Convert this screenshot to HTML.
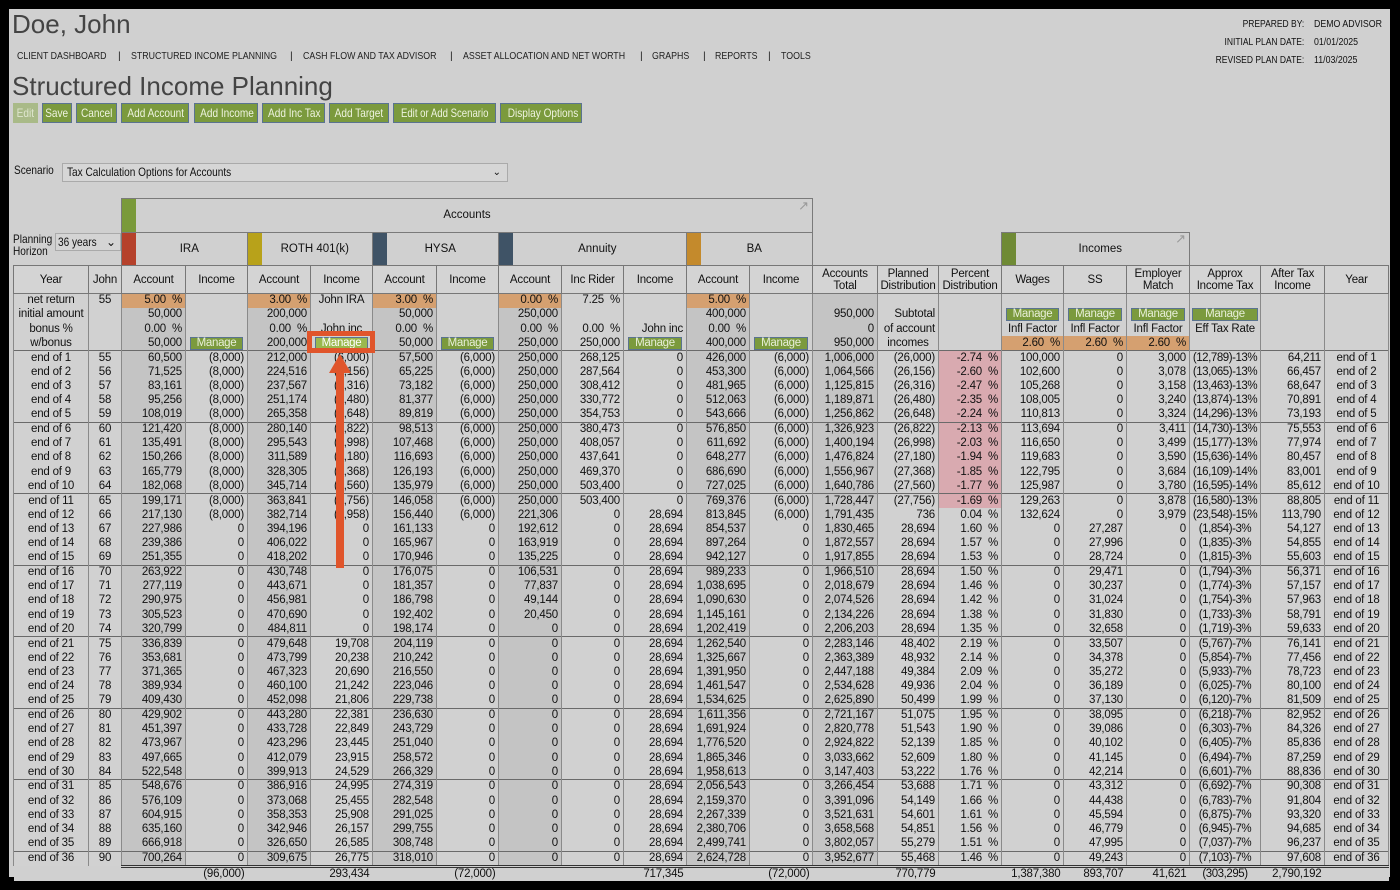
<!DOCTYPE html>
<html><head><meta charset="utf-8"><style>
*{box-sizing:border-box}
body{margin:0;width:1400px;height:890px;background:#000;overflow:hidden;font-family:"Liberation Sans",sans-serif;color:#111}
#pg{position:absolute;left:9px;top:9px;width:1381px;height:868px;background:#d0d0d0}
.a{position:absolute;white-space:nowrap}
.s{display:inline-block;transform:scaleX(.84);transform-origin:left center}
.btn{position:absolute;top:94px;height:20px;background:#7b9a3d;border:1px solid #5a7390;color:#eef3e0;font-size:12px;line-height:18px;text-align:center;white-space:nowrap;overflow:hidden}
.btn span{display:inline-block;transform:scaleX(.84)}
.nav{font-size:10.5px;top:41px;color:#222}
.box{position:absolute;border:1px solid #7a7a7a;font-size:11.5px;text-align:center}
.strip{position:absolute;top:0;bottom:0;left:0;width:14px}
table{position:absolute;left:4px;top:256px;border-collapse:collapse;table-layout:fixed;width:1375px;font-size:11.5px;letter-spacing:-0.2px}
td{padding:0 3px;height:14.3px;line-height:13px;text-align:right;border-left:1px solid #8a8a8a;border-right:1px solid #8a8a8a;white-space:nowrap;overflow:hidden}
td:nth-child(1),td:nth-child(2),td:nth-child(20),td:nth-child(22){text-align:center}
td:nth-child(20){letter-spacing:-0.45px;padding:0 1px}
tr.h td{height:28px;text-align:center;line-height:12px;border:1px solid #777;background:#d4d4d4;white-space:normal;font-size:11.5px;padding:0 1px;letter-spacing:-0.2px}
tr.g td{border-top:1.5px solid #6a6a6a}
.o{background:#d5a070}
.p{background:#d9aab0}
.m{display:block;background:#7b9a3d;border:1px solid #5a7390;color:#e8efd8;text-align:center;height:13px;line-height:11px;margin:0 1px;letter-spacing:-0.3px}
.c3{background:#c4c4c4}.c1{background:#d1d1d1}
tr.t td{border:none;border-top:3px double #333;height:13px;background:#d0d0d0}
tr.t td:nth-child(1),tr.t td:nth-child(2){border-top:none}
</style></head><body><div id="pg">
<div class="a" style="left:3px;top:0;font-size:26px;color:#444">Doe, John</div>
<div class="a nav" style="left:8px"><span class="s">CLIENT DASHBOARD</span></div>
<div class="a nav" style="left:109px">|</div>
<div class="a nav" style="left:122px"><span class="s">STRUCTURED INCOME PLANNING</span></div>
<div class="a nav" style="left:281px">|</div>
<div class="a nav" style="left:294px"><span class="s">CASH FLOW AND TAX ADVISOR</span></div>
<div class="a nav" style="left:441px">|</div>
<div class="a nav" style="left:454px"><span class="s">ASSET ALLOCATION AND NET WORTH</span></div>
<div class="a nav" style="left:631px">|</div>
<div class="a nav" style="left:643px"><span class="s">GRAPHS</span></div>
<div class="a nav" style="left:694px">|</div>
<div class="a nav" style="left:706px"><span class="s">REPORTS</span></div>
<div class="a nav" style="left:759px">|</div>
<div class="a nav" style="left:772px"><span class="s">TOOLS</span></div>
<div class="a" style="right:86px;top:7px;font-size:10px;text-align:right;line-height:18px;transform:scaleX(.85);transform-origin:right center">PREPARED BY:<br>INITIAL PLAN DATE:<br>REVISED PLAN DATE:</div>
<div class="a" style="left:1305px;top:7px;font-size:10px;line-height:18px;transform:scaleX(.88);transform-origin:left center">DEMO ADVISOR<br>01/01/2025<br>11/03/2025</div>
<div class="a" style="left:3px;top:62px;font-size:26px;color:#444">Structured Income Planning</div>
<div class="btn" style="left:4px;width:25px;background:#a9ba88;color:#dfe6cf;border-color:#a9ba88"><span>Edit</span></div>
<div class="btn" style="left:33px;width:30px"><span>Save</span></div>
<div class="btn" style="left:67px;width:41px"><span>Cancel</span></div>
<div class="btn" style="left:112px;width:68px"><span>Add Account</span></div>
<div class="btn" style="left:185px;width:64px"><span>Add Income</span></div>
<div class="btn" style="left:253px;width:63px"><span>Add Inc Tax</span></div>
<div class="btn" style="left:320px;width:60px"><span>Add Target</span></div>
<div class="btn" style="left:384px;width:103px"><span style="transform:scaleX(.8);margin-left:-8px;margin-right:-8px">Edit or Add Scenario</span></div>
<div class="btn" style="left:491px;width:82px"><span>Display Options</span></div>
<div class="a" style="left:5px;top:154px;font-size:12px"><span class="s">Scenario</span></div>
<div class="a" style="left:53px;top:154px;width:446px;height:19px;border:1px solid #aaa;background:#d6d6d6;font-size:12px;line-height:17px;padding-left:4px"><span class="s">Tax Calculation Options for Accounts</span><span style="position:absolute;right:6px;font-size:10px">&#8964;</span></div>
<div class="a" style="left:4px;top:224px;font-size:12px;line-height:12px"><span class="s">Planning<br>Horizon</span></div>
<div class="a" style="left:46px;top:224px;width:66px;height:18px;border:1px solid #aaa;background:#d4d4d4;font-size:12px;line-height:16px;padding-left:2px"><span class="s">36 years</span><span style="position:absolute;right:4px">&#8964;</span></div>
<div class="box" style="left:112px;top:189px;width:692px;height:35px;line-height:33px"><div class="strip" style="background:#7a9a3a"></div>Accounts<span style="position:absolute;right:3px;top:-10px;color:#999;font-size:13px">&#8599;</span></div>
<div class="box" style="left:112px;top:223px;width:127px;height:34px;line-height:32px"><div class="strip" style="background:#b5412b"></div>&nbsp;&nbsp;&nbsp;IRA</div>
<div class="box" style="left:238px;top:223px;width:126px;height:34px;line-height:32px"><div class="strip" style="background:#b8a21a"></div>&nbsp;&nbsp;&nbsp;ROTH 401(k)</div>
<div class="box" style="left:363px;top:223px;width:127px;height:34px;line-height:32px"><div class="strip" style="background:#3f5366"></div>&nbsp;&nbsp;&nbsp;HYSA</div>
<div class="box" style="left:489px;top:223px;width:189px;height:34px;line-height:32px"><div class="strip" style="background:#3f5366"></div>&nbsp;&nbsp;&nbsp;Annuity</div>
<div class="box" style="left:677px;top:223px;width:127px;height:34px;line-height:32px"><div class="strip" style="background:#c48a2c"></div>&nbsp;&nbsp;&nbsp;BA</div>
<div class="box" style="left:992px;top:223px;width:189px;height:34px;line-height:32px"><div class="strip" style="background:#6f8a35"></div>&nbsp;&nbsp;&nbsp;Incomes<span style="position:absolute;right:3px;top:-10px;color:#999;font-size:13px">&#8599;</span></div>
<table>
<colgroup><col style="width:75px" class="c1"><col style="width:33px" class="c1"><col style="width:64px" class="c3"><col style="width:62px" class="c1"><col style="width:63px" class="c3"><col style="width:62px" class="c1"><col style="width:64px" class="c3"><col style="width:62px" class="c1"><col style="width:63px" class="c3"><col style="width:62px" class="c1"><col style="width:63px" class="c1"><col style="width:63px" class="c3"><col style="width:63px" class="c1"><col style="width:65px" class="c3"><col style="width:61px" class="c1"><col style="width:63px" class="c1"><col style="width:62px" class="c1"><col style="width:63px" class="c1"><col style="width:63px" class="c1"><col style="width:71px" class="c1"><col style="width:64px" class="c1"><col style="width:64px" class="c1"></colgroup>
<tr class="h"><td>Year<td>John<td>Account<td>Income<td>Account<td>Income<td>Account<td>Income<td>Account<td>Inc Rider<td>Income<td>Account<td>Income<td>Accounts Total<td>Planned Distribution<td>Percent Distribution<td>Wages<td>SS<td>Employer Match<td>Approx Income Tax<td>After Tax Income<td>Year</tr>
<tr><td>net return<td>55<td class="o">5.00 &nbsp;%<td><td class="o">3.00 &nbsp;%<td style="text-align:center">John IRA<td class="o">3.00 &nbsp;%<td><td class="o">0.00 &nbsp;%<td>7.25 &nbsp;%<td><td class="o">5.00 &nbsp;%<td><td><td><td><td><td><td><td><td><td></tr>
<tr><td>initial amount<td><td>50,000<td><td>200,000<td><td>50,000<td><td>250,000<td><td><td>400,000<td><td>950,000<td>Subtotal<td><td><span class="m">Manage</span><td><span class="m">Manage</span><td><span class="m">Manage</span><td><span class="m">Manage</span><td><td></tr>
<tr><td>bonus %<td><td>0.00 &nbsp;%<td><td>0.00 &nbsp;%<td style="text-align:center">John inc<td>0.00 &nbsp;%<td><td>0.00 &nbsp;%<td>0.00 &nbsp;%<td>John inc<td>0.00 &nbsp;%<td><td>0<td>of account<td><td style="text-align:center">Infl Factor<td style="text-align:center">Infl Factor<td style="text-align:center">Infl Factor<td style="text-align:center;letter-spacing:-0.2px">Eff Tax Rate<td><td></tr>
<tr><td>w/bonus<td><td>50,000<td><span class="m">Manage</span><td>200,000<td><span class="m" style="background:#9ab84e;color:#fff">Manage</span><td>50,000<td><span class="m">Manage</span><td>250,000<td>250,000<td><span class="m">Manage</span><td>400,000<td><span class="m">Manage</span><td>950,000<td style="text-align:center">incomes<td><td class="o">2.60 &nbsp;%<td class="o">2.60 &nbsp;%<td class="o">2.60 &nbsp;%<td><td><td></tr>
<tr class="g"><td>end of 1<td>55<td>60,500<td>(8,000)<td>212,000<td>(6,000)<td>57,500<td>(6,000)<td>250,000<td>268,125<td>0<td>426,000<td>(6,000)<td>1,006,000<td>(26,000)<td class="p">-2.74 &nbsp;%<td>100,000<td>0<td>3,000<td>(12,789)-13%<td>64,211<td>end of 1</tr>
<tr><td>end of 2<td>56<td>71,525<td>(8,000)<td>224,516<td>(6,156)<td>65,225<td>(6,000)<td>250,000<td>287,564<td>0<td>453,300<td>(6,000)<td>1,064,566<td>(26,156)<td class="p">-2.60 &nbsp;%<td>102,600<td>0<td>3,078<td>(13,065)-13%<td>66,457<td>end of 2</tr>
<tr><td>end of 3<td>57<td>83,161<td>(8,000)<td>237,567<td>(6,316)<td>73,182<td>(6,000)<td>250,000<td>308,412<td>0<td>481,965<td>(6,000)<td>1,125,815<td>(26,316)<td class="p">-2.47 &nbsp;%<td>105,268<td>0<td>3,158<td>(13,463)-13%<td>68,647<td>end of 3</tr>
<tr><td>end of 4<td>58<td>95,256<td>(8,000)<td>251,174<td>(6,480)<td>81,377<td>(6,000)<td>250,000<td>330,772<td>0<td>512,063<td>(6,000)<td>1,189,871<td>(26,480)<td class="p">-2.35 &nbsp;%<td>108,005<td>0<td>3,240<td>(13,874)-13%<td>70,891<td>end of 4</tr>
<tr><td>end of 5<td>59<td>108,019<td>(8,000)<td>265,358<td>(6,648)<td>89,819<td>(6,000)<td>250,000<td>354,753<td>0<td>543,666<td>(6,000)<td>1,256,862<td>(26,648)<td class="p">-2.24 &nbsp;%<td>110,813<td>0<td>3,324<td>(14,296)-13%<td>73,193<td>end of 5</tr>
<tr class="g"><td>end of 6<td>60<td>121,420<td>(8,000)<td>280,140<td>(6,822)<td>98,513<td>(6,000)<td>250,000<td>380,473<td>0<td>576,850<td>(6,000)<td>1,326,923<td>(26,822)<td class="p">-2.13 &nbsp;%<td>113,694<td>0<td>3,411<td>(14,730)-13%<td>75,553<td>end of 6</tr>
<tr><td>end of 7<td>61<td>135,491<td>(8,000)<td>295,543<td>(6,998)<td>107,468<td>(6,000)<td>250,000<td>408,057<td>0<td>611,692<td>(6,000)<td>1,400,194<td>(26,998)<td class="p">-2.03 &nbsp;%<td>116,650<td>0<td>3,499<td>(15,177)-13%<td>77,974<td>end of 7</tr>
<tr><td>end of 8<td>62<td>150,266<td>(8,000)<td>311,589<td>(7,180)<td>116,693<td>(6,000)<td>250,000<td>437,641<td>0<td>648,277<td>(6,000)<td>1,476,824<td>(27,180)<td class="p">-1.94 &nbsp;%<td>119,683<td>0<td>3,590<td>(15,636)-14%<td>80,457<td>end of 8</tr>
<tr><td>end of 9<td>63<td>165,779<td>(8,000)<td>328,305<td>(7,368)<td>126,193<td>(6,000)<td>250,000<td>469,370<td>0<td>686,690<td>(6,000)<td>1,556,967<td>(27,368)<td class="p">-1.85 &nbsp;%<td>122,795<td>0<td>3,684<td>(16,109)-14%<td>83,001<td>end of 9</tr>
<tr><td>end of 10<td>64<td>182,068<td>(8,000)<td>345,714<td>(7,560)<td>135,979<td>(6,000)<td>250,000<td>503,400<td>0<td>727,025<td>(6,000)<td>1,640,786<td>(27,560)<td class="p">-1.77 &nbsp;%<td>125,987<td>0<td>3,780<td>(16,595)-14%<td>85,612<td>end of 10</tr>
<tr class="g"><td>end of 11<td>65<td>199,171<td>(8,000)<td>363,841<td>(7,756)<td>146,058<td>(6,000)<td>250,000<td>503,400<td>0<td>769,376<td>(6,000)<td>1,728,447<td>(27,756)<td class="p">-1.69 &nbsp;%<td>129,263<td>0<td>3,878<td>(16,580)-13%<td>88,805<td>end of 11</tr>
<tr><td>end of 12<td>66<td>217,130<td>(8,000)<td>382,714<td>(7,958)<td>156,440<td>(6,000)<td>221,306<td>0<td>28,694<td>813,845<td>(6,000)<td>1,791,435<td>736<td>0.04 &nbsp;%<td>132,624<td>0<td>3,979<td>(23,548)-15%<td>113,790<td>end of 12</tr>
<tr><td>end of 13<td>67<td>227,986<td>0<td>394,196<td>0<td>161,133<td>0<td>192,612<td>0<td>28,694<td>854,537<td>0<td>1,830,465<td>28,694<td>1.60 &nbsp;%<td>0<td>27,287<td>0<td>(1,854)-3%<td>54,127<td>end of 13</tr>
<tr><td>end of 14<td>68<td>239,386<td>0<td>406,022<td>0<td>165,967<td>0<td>163,919<td>0<td>28,694<td>897,264<td>0<td>1,872,557<td>28,694<td>1.57 &nbsp;%<td>0<td>27,996<td>0<td>(1,835)-3%<td>54,855<td>end of 14</tr>
<tr><td>end of 15<td>69<td>251,355<td>0<td>418,202<td>0<td>170,946<td>0<td>135,225<td>0<td>28,694<td>942,127<td>0<td>1,917,855<td>28,694<td>1.53 &nbsp;%<td>0<td>28,724<td>0<td>(1,815)-3%<td>55,603<td>end of 15</tr>
<tr class="g"><td>end of 16<td>70<td>263,922<td>0<td>430,748<td>0<td>176,075<td>0<td>106,531<td>0<td>28,694<td>989,233<td>0<td>1,966,510<td>28,694<td>1.50 &nbsp;%<td>0<td>29,471<td>0<td>(1,794)-3%<td>56,371<td>end of 16</tr>
<tr><td>end of 17<td>71<td>277,119<td>0<td>443,671<td>0<td>181,357<td>0<td>77,837<td>0<td>28,694<td>1,038,695<td>0<td>2,018,679<td>28,694<td>1.46 &nbsp;%<td>0<td>30,237<td>0<td>(1,774)-3%<td>57,157<td>end of 17</tr>
<tr><td>end of 18<td>72<td>290,975<td>0<td>456,981<td>0<td>186,798<td>0<td>49,144<td>0<td>28,694<td>1,090,630<td>0<td>2,074,526<td>28,694<td>1.42 &nbsp;%<td>0<td>31,024<td>0<td>(1,754)-3%<td>57,963<td>end of 18</tr>
<tr><td>end of 19<td>73<td>305,523<td>0<td>470,690<td>0<td>192,402<td>0<td>20,450<td>0<td>28,694<td>1,145,161<td>0<td>2,134,226<td>28,694<td>1.38 &nbsp;%<td>0<td>31,830<td>0<td>(1,733)-3%<td>58,791<td>end of 19</tr>
<tr><td>end of 20<td>74<td>320,799<td>0<td>484,811<td>0<td>198,174<td>0<td>0<td>0<td>28,694<td>1,202,419<td>0<td>2,206,203<td>28,694<td>1.35 &nbsp;%<td>0<td>32,658<td>0<td>(1,719)-3%<td>59,633<td>end of 20</tr>
<tr class="g"><td>end of 21<td>75<td>336,839<td>0<td>479,648<td>19,708<td>204,119<td>0<td>0<td>0<td>28,694<td>1,262,540<td>0<td>2,283,146<td>48,402<td>2.19 &nbsp;%<td>0<td>33,507<td>0<td>(5,767)-7%<td>76,141<td>end of 21</tr>
<tr><td>end of 22<td>76<td>353,681<td>0<td>473,799<td>20,238<td>210,242<td>0<td>0<td>0<td>28,694<td>1,325,667<td>0<td>2,363,389<td>48,932<td>2.14 &nbsp;%<td>0<td>34,378<td>0<td>(5,854)-7%<td>77,456<td>end of 22</tr>
<tr><td>end of 23<td>77<td>371,365<td>0<td>467,323<td>20,690<td>216,550<td>0<td>0<td>0<td>28,694<td>1,391,950<td>0<td>2,447,188<td>49,384<td>2.09 &nbsp;%<td>0<td>35,272<td>0<td>(5,933)-7%<td>78,723<td>end of 23</tr>
<tr><td>end of 24<td>78<td>389,934<td>0<td>460,100<td>21,242<td>223,046<td>0<td>0<td>0<td>28,694<td>1,461,547<td>0<td>2,534,628<td>49,936<td>2.04 &nbsp;%<td>0<td>36,189<td>0<td>(6,025)-7%<td>80,100<td>end of 24</tr>
<tr><td>end of 25<td>79<td>409,430<td>0<td>452,098<td>21,806<td>229,738<td>0<td>0<td>0<td>28,694<td>1,534,625<td>0<td>2,625,890<td>50,499<td>1.99 &nbsp;%<td>0<td>37,130<td>0<td>(6,120)-7%<td>81,509<td>end of 25</tr>
<tr class="g"><td>end of 26<td>80<td>429,902<td>0<td>443,280<td>22,381<td>236,630<td>0<td>0<td>0<td>28,694<td>1,611,356<td>0<td>2,721,167<td>51,075<td>1.95 &nbsp;%<td>0<td>38,095<td>0<td>(6,218)-7%<td>82,952<td>end of 26</tr>
<tr><td>end of 27<td>81<td>451,397<td>0<td>433,728<td>22,849<td>243,729<td>0<td>0<td>0<td>28,694<td>1,691,924<td>0<td>2,820,778<td>51,543<td>1.90 &nbsp;%<td>0<td>39,086<td>0<td>(6,303)-7%<td>84,326<td>end of 27</tr>
<tr><td>end of 28<td>82<td>473,967<td>0<td>423,296<td>23,445<td>251,040<td>0<td>0<td>0<td>28,694<td>1,776,520<td>0<td>2,924,822<td>52,139<td>1.85 &nbsp;%<td>0<td>40,102<td>0<td>(6,405)-7%<td>85,836<td>end of 28</tr>
<tr><td>end of 29<td>83<td>497,665<td>0<td>412,079<td>23,915<td>258,572<td>0<td>0<td>0<td>28,694<td>1,865,346<td>0<td>3,033,662<td>52,609<td>1.80 &nbsp;%<td>0<td>41,145<td>0<td>(6,494)-7%<td>87,259<td>end of 29</tr>
<tr><td>end of 30<td>84<td>522,548<td>0<td>399,913<td>24,529<td>266,329<td>0<td>0<td>0<td>28,694<td>1,958,613<td>0<td>3,147,403<td>53,222<td>1.76 &nbsp;%<td>0<td>42,214<td>0<td>(6,601)-7%<td>88,836<td>end of 30</tr>
<tr class="g"><td>end of 31<td>85<td>548,676<td>0<td>386,916<td>24,995<td>274,319<td>0<td>0<td>0<td>28,694<td>2,056,543<td>0<td>3,266,454<td>53,688<td>1.71 &nbsp;%<td>0<td>43,312<td>0<td>(6,692)-7%<td>90,308<td>end of 31</tr>
<tr><td>end of 32<td>86<td>576,109<td>0<td>373,068<td>25,455<td>282,548<td>0<td>0<td>0<td>28,694<td>2,159,370<td>0<td>3,391,096<td>54,149<td>1.66 &nbsp;%<td>0<td>44,438<td>0<td>(6,783)-7%<td>91,804<td>end of 32</tr>
<tr><td>end of 33<td>87<td>604,915<td>0<td>358,353<td>25,908<td>291,025<td>0<td>0<td>0<td>28,694<td>2,267,339<td>0<td>3,521,631<td>54,601<td>1.61 &nbsp;%<td>0<td>45,594<td>0<td>(6,875)-7%<td>93,320<td>end of 33</tr>
<tr><td>end of 34<td>88<td>635,160<td>0<td>342,946<td>26,157<td>299,755<td>0<td>0<td>0<td>28,694<td>2,380,706<td>0<td>3,658,568<td>54,851<td>1.56 &nbsp;%<td>0<td>46,779<td>0<td>(6,945)-7%<td>94,685<td>end of 34</tr>
<tr><td>end of 35<td>89<td>666,918<td>0<td>326,650<td>26,585<td>308,748<td>0<td>0<td>0<td>28,694<td>2,499,741<td>0<td>3,802,057<td>55,279<td>1.51 &nbsp;%<td>0<td>47,995<td>0<td>(7,037)-7%<td>96,237<td>end of 35</tr>
<tr class="g"><td>end of 36<td>90<td>700,264<td>0<td>309,675<td>26,775<td>318,010<td>0<td>0<td>0<td>28,694<td>2,624,728<td>0<td>3,952,677<td>55,468<td>1.46 &nbsp;%<td>0<td>49,243<td>0<td>(7,103)-7%<td>97,608<td>end of 36</tr>
<tr class="t"><td><td><td><td>(96,000)<td><td>293,434<td><td>(72,000)<td><td><td>717,345<td><td>(72,000)<td><td>770,779<td><td>1,387,380<td>893,707<td>41,621<td>(303,295)<td>2,790,192<td></tr>
</table>
<div class="a" style="left:298px;top:322px;width:68px;height:22px;border:5px solid #e0552b"></div>
<svg class="a" style="left:318px;top:344px" width="26" height="215"><polygon points="13,1 24,20 17,20 17,215 9,215 9,20 2,20" fill="#e0552b"/></svg>
</div></body></html>
